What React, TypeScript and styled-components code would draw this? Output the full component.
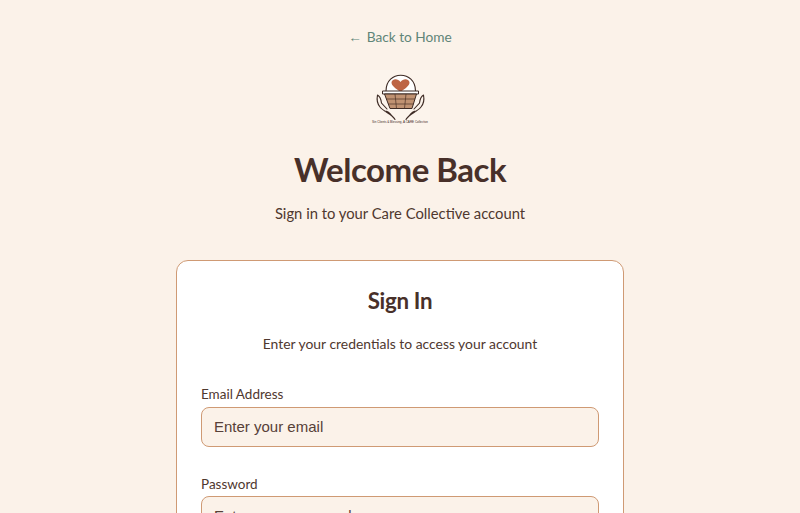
import React from "react";
import styled, { createGlobalStyle } from "styled-components";

const Global = createGlobalStyle`
  html, body { margin: 0; padding: 0; background: #fbf2e9; height: 513px; overflow: hidden; }
  * { box-sizing: border-box; }
`;

const Page = styled.main`
  display: flex;
  flex-direction: column;
  align-items: center;
  padding-top: 26px;
  font-family: Lato, "Noto Sans", sans-serif;
  color: #4f382f;
`;

const BackLink = styled.a`
  display: flex;
  align-items: center;
  gap: 5px;
  font-size: 13.7px;
  line-height: 20px;
  color: #5f8578;
  text-decoration: none;
  margin-bottom: 22px;
`;

const Arrow = styled.span`
  font-family: "Liberation Sans", sans-serif;
  font-size: 13.5px;
  line-height: 20px;
  padding-top: 2px;
`;

const Logo = styled.svg`
  display: block;
  width: 60px;
  height: 60px;
  margin-bottom: 19px;
`;

const Title = styled.h1`
  margin: 0 0 12px;
  font-size: 33px;
  line-height: 40px;
  font-weight: 700;
  letter-spacing: -0.5px;
  color: #483029;
`;

const Subtitle = styled.p`
  margin: 0 0 35px;
  font-size: 14.8px;
  line-height: 24px;
`;

const Card = styled.section`
  width: 448px;
  padding: 24px;
  background: #fff;
  border: 1px solid #cf9a74;
  border-radius: 12px;
`;

const CardTitle = styled.h2`
  margin: 0 0 17px;
  text-align: center;
  font-size: 22.3px;
  line-height: 32px;
  font-weight: 700;
  letter-spacing: -0.3px;
  color: #483029;
`;

const CardText = styled.p`
  margin: 0 0 30px;
  text-align: center;
  font-size: 13.9px;
  line-height: 20px;
`;

const Field = styled.div`
  display: flex;
  flex-direction: column;
  gap: 2.7px;
  margin-bottom: 27px;
`;

const Label = styled.label`
  font-size: 13.5px;
  line-height: 20px;
`;

const Input = styled.input`
  width: 100%;
  height: 40px;
  padding: 0 12px 1px;
  border: 1px solid #cf9a74;
  border-radius: 8px;
  background: #fbf2e9;
  font-family: "Liberation Sans", Arial, sans-serif;
  font-size: 15px;
  color: #483029;
  &::placeholder { color: #574038; opacity: 1; }
`;

export default function App() {
  return (
    <>
      <Global />
      <Page>
        <BackLink href="#"><Arrow>←</Arrow>Back to Home</BackLink>
        <Logo viewBox="0 0 60 60" aria-label="Care Collective logo">
          <rect width="60" height="60" fill="#fcf4ec" />
          <path d="M16 21 C16 0 45.5 0 45.5 21" fill="#fff" stroke="#3d2a24" strokeWidth="1.1" />
          <path d="M30.5 22 C26 18.5 21.5 16 21.5 12.5 C21.5 9 27.5 7.5 30.5 12 C33.5 7.5 39.5 9 39.5 12.5 C39.5 16 35 18.5 30.5 22 Z" fill="#bd6444" />
          <path d="M12.5 21 H48.5 V24 H12.5 Z" fill="#fff" stroke="#3d2a24" strokeWidth="1" />
          <path d="M14.5 24 H46.5 L42 38.5 H20 Z" fill="#c09272" stroke="#3d2a24" strokeWidth="1" />
          <path d="M16 29 H45 M18 34 H43.5 M25 24 L26.5 38.5 M36 24 L34.5 38.5" fill="none" stroke="#4a3026" strokeWidth="0.7" />
          <path d="M7.5 25 C6.5 30 7.5 34 10 37 C13 41 19 43 22 46 C23.5 47.5 24.5 48.5 25 49.5 M7.5 25 C9.5 26 11 29 11.5 33 L17 39 M14.5 41 C17 41 20 43 22 46" fill="none" stroke="#3d2a24" strokeWidth="1.1" strokeLinecap="round" />
          <path d="M53.5 25 C54.5 30 53.5 34 51 37 C48 41 42 43 39 46 C37.5 47.5 36.5 48.5 36 49.5 M53.5 25 C51.5 26 50 29 49.5 33 L44 39 M46.5 41 C44 41 41 43 39 46" fill="none" stroke="#3d2a24" strokeWidth="1.1" strokeLinecap="round" />
          <text x="30" y="53" textAnchor="middle" fontSize="3" fontFamily="Liberation Sans, sans-serif" fill="#3d2a24" textLength="56" lengthAdjust="spacingAndGlyphs">Sin Clients &amp; Blessing, A CARE Collective</text>
        </Logo>
        <Title>Welcome Back</Title>
        <Subtitle>Sign in to your Care Collective account</Subtitle>
        <Card>
          <CardTitle>Sign In</CardTitle>
          <CardText>Enter your credentials to access your account</CardText>
          <Field>
            <Label htmlFor="email">Email Address</Label>
            <Input id="email" type="email" placeholder="Enter your email" />
          </Field>
          <Field>
            <Label htmlFor="password">Password</Label>
            <Input id="password" type="password" placeholder="Enter your password" />
          </Field>
        </Card>
      </Page>
    </>
  );
}
